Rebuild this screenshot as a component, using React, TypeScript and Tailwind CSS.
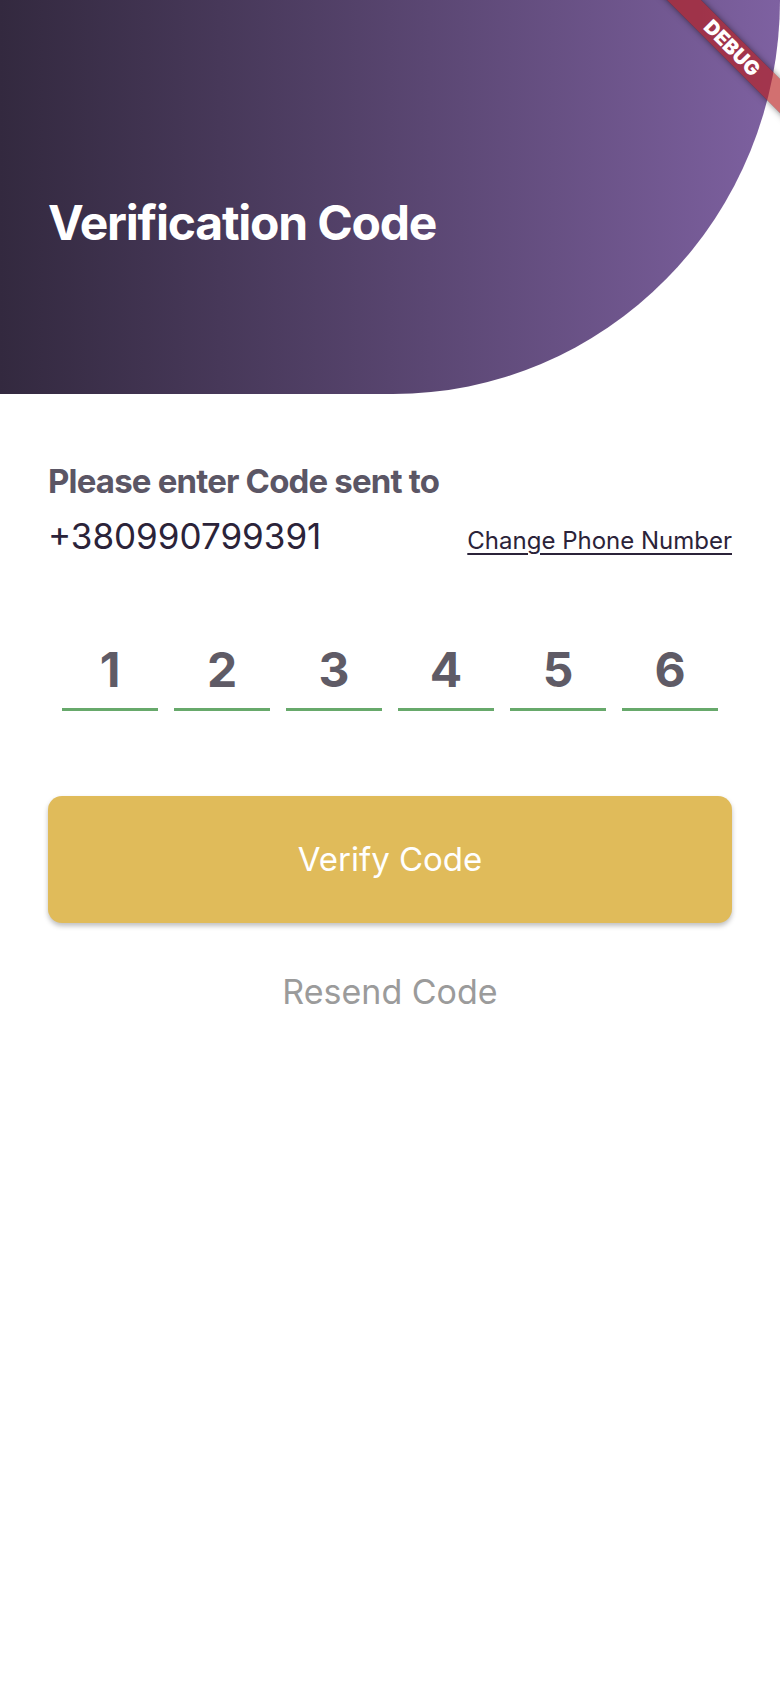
import React from "react";

const digits = ["1", "2", "3", "4", "5", "6"];

function DebugBanner() {
  return (
    <div className="pointer-events-none absolute left-[632px] top-[36px] flex h-[24px] w-[200px] rotate-45 items-center justify-center bg-[rgba(183,28,28,0.63)] shadow-[0_0_6px_rgba(0,0,0,0.5)]">
      <span className="text-[20px] font-black leading-none text-white">DEBUG</span>
    </div>
  );
}

export default function App() {
  return (
    <div
      className="relative min-h-[1686px] w-[780px] overflow-hidden bg-white"
      style={{ fontFamily: "Inter, 'Noto Sans', sans-serif" }}
    >
      {/* Header */}
      <div className="h-[394px] w-full rounded-br-[387px_394px] bg-gradient-to-r from-[#33293f] to-[#7e61a1] px-12 pt-[199px]">
        <h1 className="text-[48px] font-bold leading-[48px] tracking-tight text-white">
          Verification Code
        </h1>
      </div>

      {/* Body */}
      <div className="flex flex-col px-12">
        <p className="mt-[67px] text-[33px] font-bold leading-[40px] tracking-tight text-[#5b5665]">
          Please enter Code sent to
        </p>
        <div className="mt-[15px] flex items-baseline justify-between">
          <span className="text-[35px] leading-[40px] text-[#2b2339]">+380990799391</span>
          <a href="#" className="text-[24px] text-[#2b2339] underline underline-offset-4">
            Change Phone Number
          </a>
        </div>

        {/* OTP fields */}
        <div className="mt-[83px] flex justify-center gap-4">
          {digits.map((d) => (
            <div key={d} className="flex w-[96px] flex-col items-center">
              <span className="text-[48px] font-bold leading-[56px] text-[#5f5b66]">{d}</span>
              <div className="mt-[10px] h-[3px] w-full bg-[#67a96b]" />
            </div>
          ))}
        </div>

        <button className="mt-[85px] flex h-[127px] w-full items-center justify-center rounded-[14px] bg-[#e0bb5a] text-[33px] text-white shadow-[0_3px_5px_rgba(0,0,0,0.25)]">
          Verify Code
        </button>

        <button className="mt-[49px] text-center text-[34px] leading-[40px] text-[#9b9b9b]">
          Resend Code
        </button>
      </div>

      <DebugBanner />
    </div>
  );
}
